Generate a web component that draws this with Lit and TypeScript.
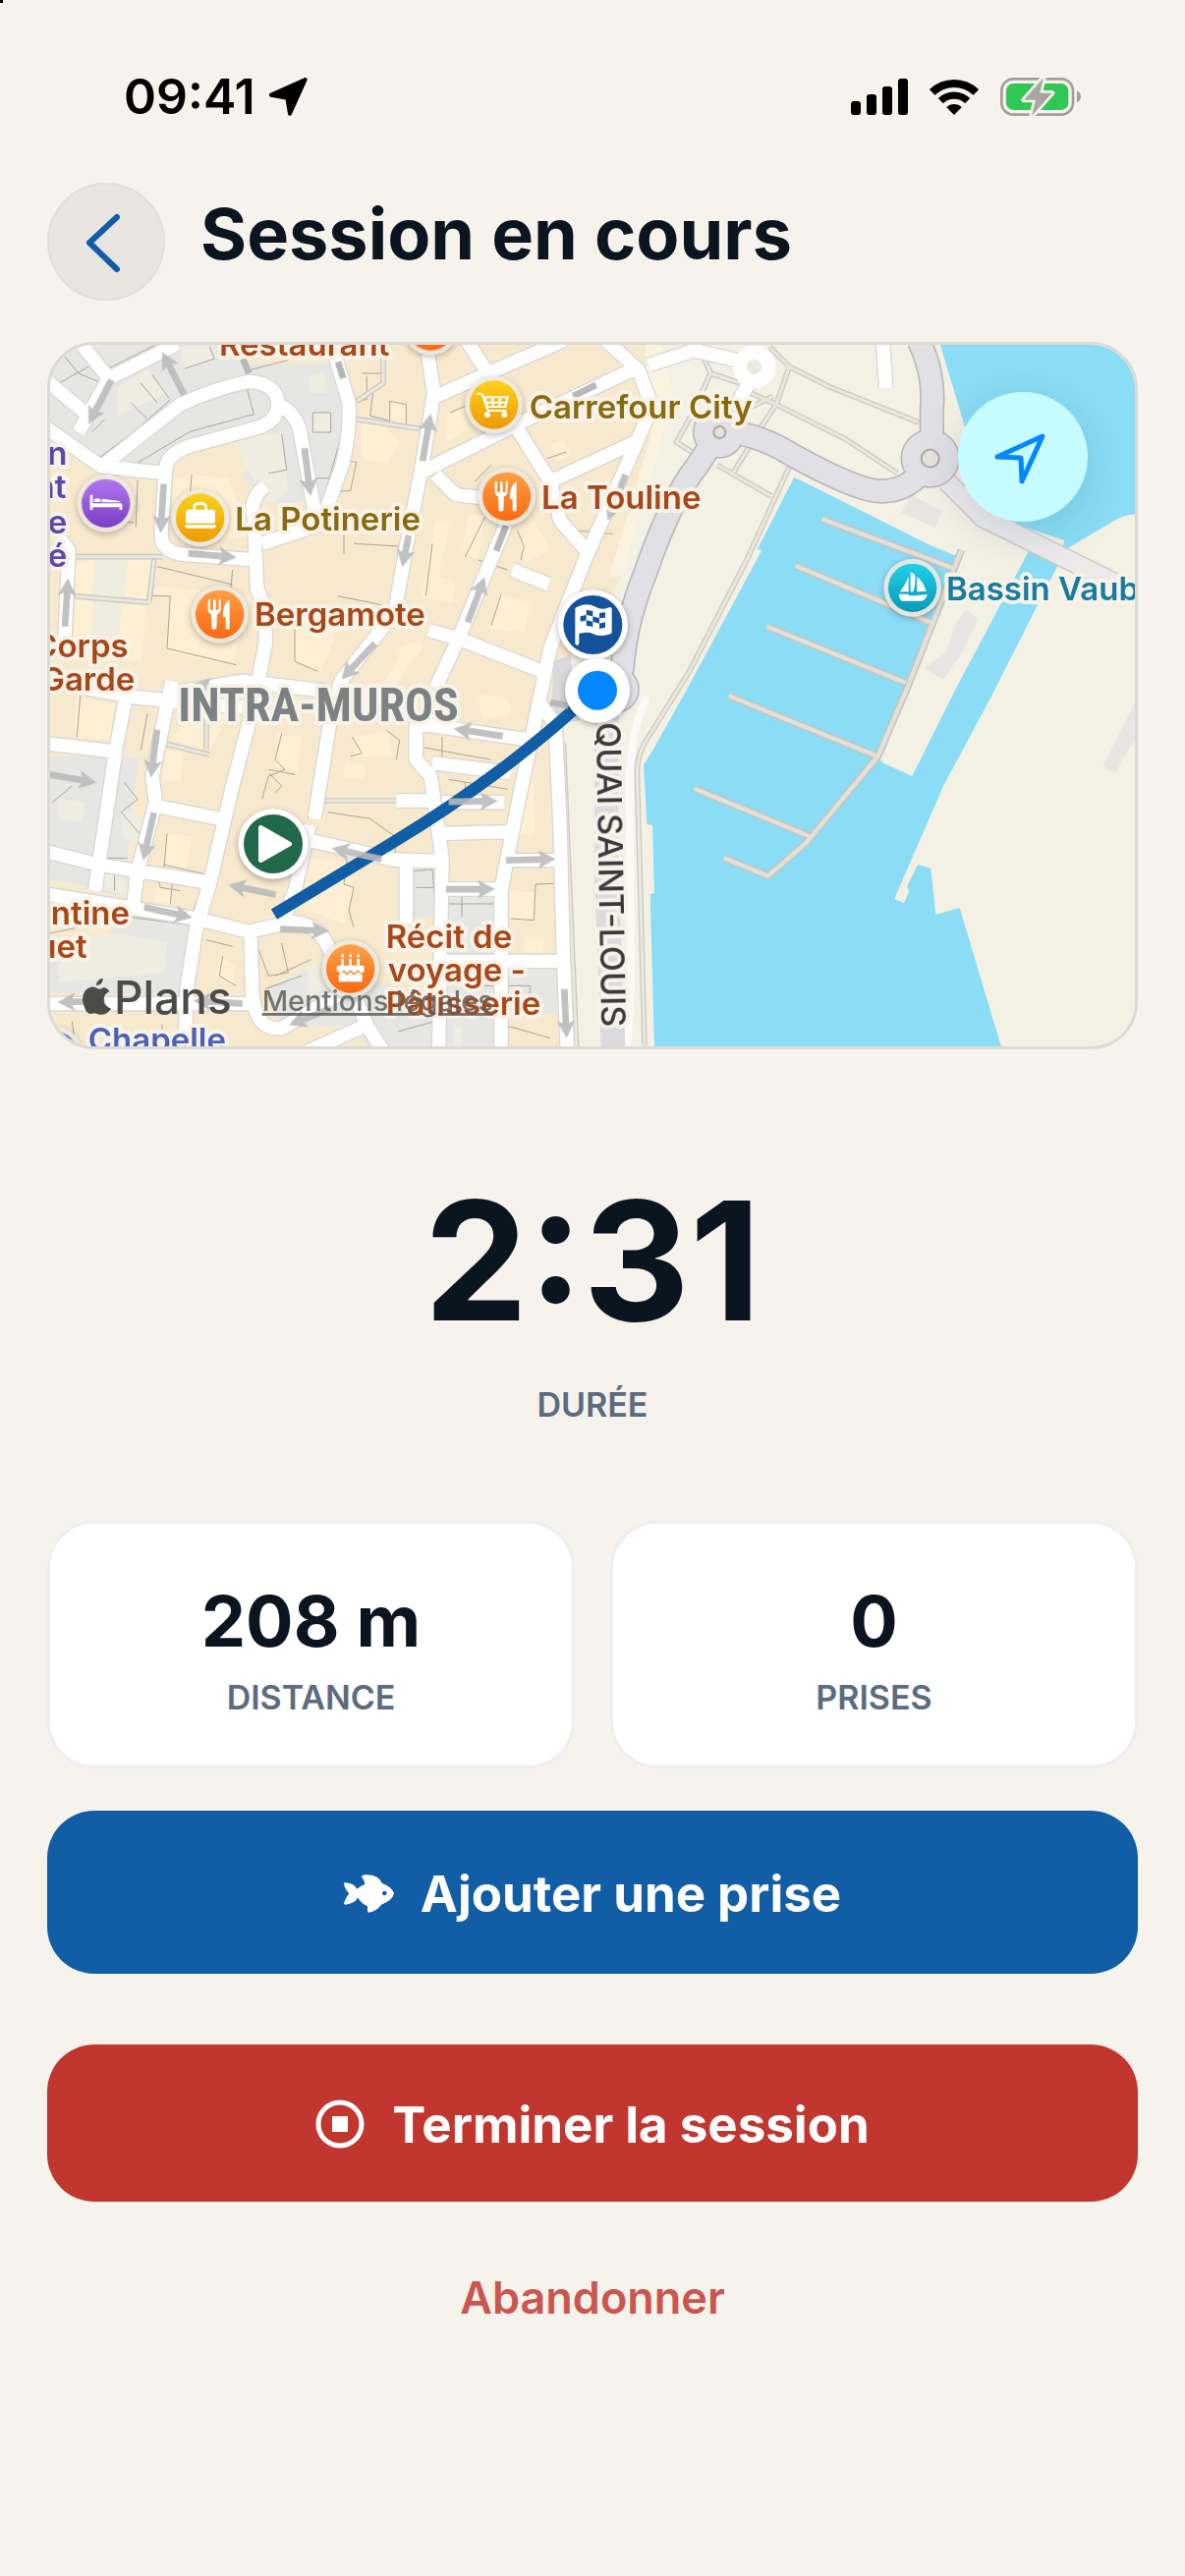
import { LitElement, html, svg, css } from 'lit';
import { customElement, property } from 'lit/decorators.js';

// Map geometry. The plan is drawn on a 3312 x 2142 grid that starts at 33,33.

const WATER = [
  'M2305 437L2720 645 2805 680 2760 800 2645 1080 2560 1295 2580 1312 2665 1350 2800 1080 3025 655 3010 590 3130 630 3115 695 2905 1110 2760 1380 2630 1680 2610 1725 2640 1738 2655 1705 2650 1685 2682 1620 2722 1632 2737 1773 2810 1752 2938 2180H1878L1865 1710 1878 1708 1872 1500 1855 1497 1845 1315 1865 1285 1980 1080 2205 662 2193 656Z',
  'M2750 30L2825 280 2900 500 3010 600 3130 660 3290 565Q3320 550 3350 550V30Z',
];

const GREY_BLOCKS = [
  'M33 33H560L640 90 900 90 960 280 890 500 720 520 620 440 700 300 400 350 375 400 190 400 33 300Z',
  'M33 1290L220 1290 165 1690 33 1665Z',
  'M245 1290L305 1295 275 1500 265 1715 185 1705Z',
  'M250 1765L470 1805 430 2020 33 2010V1880L150 1960Z',
  'M690 2000L860 1920 1040 1980 1220 2060V2175H1000L960 2110 740 2120Z',
  'M1137 1635L1200 1632 1212 1780 1138 1780Z',
  'M1242 1715L1395 1722 1390 1910 1240 1900Z',
  'M1225 1960H1390V2175H1225ZM1435 1940H1580L1590 2080 1435 2060Z',
];

const GREEN_PATCHES = [
  'M200 100L330 45 300 80 215 125ZM430 40H520L540 75 445 105ZM240 160L330 110 390 180 240 250Z',
  'M170 690L270 690 240 930 160 930Z',
  'M590 330L740 300 760 480 700 520 660 450Z',
  'M820 130L870 120 880 180 830 180ZM835 240H890V300H835Z',
  'M60 1420L140 1430 130 1490 60 1480ZM250 1460L310 1470 300 1550 260 1540Z',
  'M190 1600L260 1630 265 1710 185 1695Z',
  'M60 1850L250 1830 390 1860 380 1950 60 1980Z',
  'M820 1930L900 1900 940 1960 820 2030ZM1265 2110L1290 2120V2175H1265Z',
];

const LIGHT_BLOCKS = [
  'M110 700L170 690 160 800 105 795ZM110 810L330 830 310 1000 100 990ZM270 690H345L335 810 260 800Z',
  'M470 430L580 440 640 620 400 640 410 440Z',
  'M360 770L650 800 590 1010 385 970 400 800 345 790Z',
  'M780 870L930 860 860 1030 780 1000ZM1130 940L1175 950 1080 1080H1040Z',
  'M985 270L1040 265 1100 330 1060 400 985 380ZM1080 200L1120 215V275L1070 270Z',
  'M1210 570L1255 570 1220 740 1270 760 1260 820 1165 805Z',
  'M1310 550L1360 555 1340 690 1290 670ZM1240 250L1300 220 1310 290 1240 330Z',
  'M1510 570L1560 660 1480 700 1470 640ZM1410 795L1500 820 1480 910 1370 900Z',
  'M1560 340L1600 320 1620 370 1580 390ZM1100 960L1170 930 1080 1070Z',
  'M725 1220L800 1230 790 1340 720 1320ZM385 1270L440 1280 430 1370 380 1360Z',
  'M390 1525L465 1535 450 1640 375 1620ZM350 1690L410 1700 400 1740 350 1735Z',
  'M955 1230L1060 1210 1080 1290 960 1290ZM935 1310L1000 1315 990 1360 925 1355Z',
  'M820 1600L940 1610 960 1700 930 1800 790 1750ZM1000 1100H1070L1080 1160 1000 1180Z',
  'M1440 1700L1515 1705 1510 1790 1435 1785ZM1480 1840H1540V1900H1480ZM1460 1350L1510 1340V1530L1450 1530Z',
  'M1340 1100L1430 1110 1440 1160 1350 1180ZM550 1900L600 1930 590 1990 540 1960Z',
  'M490 1110L600 1120 520 1270 400 1240ZM110 1110L230 1130 215 1240 110 1230Z',
];

const BUILDING_LINES = [
  'M70 60L120 120 190 150M150 100L60 150M95 190L145 235 170 220M180 380L300 290 400 200',
  'M280 405L460 298 655 245 630 150M160 300L200 260M280 210L330 260M310 150L360 210M345 125L395 195',
  'M200 110L350 35M445 105L535 75 520 40M500 170L640 145M640 110L760 80',
  'M835 240H890V300H835ZM700 425L755 415 740 305M840 440H890M930 100L925 300 880 460',
  'M985 120H1050V160M1000 130V200L970 205M1020 170L1010 250 1070 265M1070 265V205L1120 215V275',
  'M465 430L460 500M300 445L295 590M210 575H290M590 720L585 775M110 680H350L345 800',
  'M360 710L590 765M400 800L390 960 600 1010M340 800L400 800M780 870V1000L850 1030M910 800L1060 830',
  'M915 480L940 385 968 392 950 478ZM930 600V670M1200 640L1180 800M960 640L1130 650',
  'M1255 240L1300 220M1490 250L1760 130M1320 340L1400 300M1330 450L1380 400M1550 380L1610 360M1640 600L1750 610',
  'M1460 600L1480 650 1470 690M1410 795L1380 890M1340 690L1430 720M1300 680L1360 560',
  'M125 1105L115 1230M330 1160L310 1270M460 1100L470 1180M510 1120L500 1190 520 1200',
  'M740 1220L720 1300 750 1330 700 1350 680 1420M700 1340L740 1380 720 1400M700 1330L780 1345',
  'M870 1230L820 1480M955 1230L985 1280 950 1290M1060 1210L1100 1240 1090 1300M870 1430H1080',
  'M390 1525L380 1640M540 1520L510 1650 380 1620M260 1370L300 1420 250 1460 310 1530M100 1380L40 1430M200 1520L150 1690',
  'M180 1600H270M230 1640V1700M410 1640L400 1740M500 1680L470 1760M360 1660L370 1690 430 1700',
  'M940 1600L930 1680 960 1690 945 1760 960 1810M880 1460L1010 1480 1080 1530 1090 1600',
  'M510 1850L590 1870M560 1900L550 1960 600 1990M740 1860L760 1950 700 1960 670 1880M720 1960L830 1910',
  'M1140 1640L1200 1635 1212 1780M1150 1690H1210M1245 1740H1390M1290 1720V1780M1160 1260L1380 1300M1230 1230V1300',
  'M1250 1360L1430 1390M1300 1370V1420M1520 1240L1510 1300M1440 1785L1510 1790 1515 1680 1575 1678M1340 1990H1500L1490 2060',
  'M1095 2130L1240 2090M1420 2110L1560 2150M690 2000L800 1960M33 1830L270 1780 470 1805M375 2110V2170M100 2100L110 2175',
];

const LANES = [
  'M120 20L212 135 120 300M212 135L420 30',
  'M20 140L150 250M20 285L190 405 385 425',
  'M190 405L430 215Q540 165 640 145 720 150 728 205 735 270 650 290L450 345Q385 370 385 420L372 610Q372 660 430 672L665 690',
  'M728 215Q790 240 800 320L840 540',
  'M890 20L945 210Q950 300 925 400L860 580 680 640',
  'M690 465Q640 500 655 560L665 780Q695 840 690 950L650 1150 590 1380 520 1680 480 1810 450 2000 445 2180',
  'M1180 20L1205 180 1165 420 1120 650 1085 850 920 1060 885 1200 840 1480M825 1500L780 1700 740 1800',
  'M60 620L90 660 75 990M20 1060L300 1110 620 1140M880 1090L620 1060 380 1100',
  'M20 1250L230 1275M270 1080L235 1260 170 1700M405 1060L345 1350 355 1430 300 1640 285 1760',
  'M350 1440L550 1480M20 1580L180 1620 520 1675M20 1710L480 1785 640 1825 770 1795Q860 1800 890 1890',
  'M645 1830L650 2010Q660 2130 740 2120L960 1990M20 2045H650M820 2190L1000 2110 1050 2190M1000 2110L970 2040',
  'M800 1540L1080 1605 1230 1610M1120 1610L1120 1800',
  'M1200 1180L1150 1200 1150 1300 1195 1350 1230 1600 1220 2180M1160 1190L1500 1240M1200 1310L1440 1340M1090 1425H1200M1230 1430L1420 1430M1230 1525L1430 1520',
  'M1305 20L1370 120M1200 195L1370 120 1600 20M1170 420L1480 265 1820 105',
  'M1730 20L1830 110 1870 220 1820 340 1670 680 1610 830 1560 960 1520 1150 1440 1540 1410 1700V2190',
  'M1460 290L1560 450 1590 570 1670 660M1560 450L1820 330M1210 430L1270 490 1390 505',
  'M1425 580L1280 930 1210 1080M1190 905L1280 930 1560 1040M1445 720L1555 765',
  'M1530 1130L1575 1190 1590 1500 1600 1900 1612 2190M1410 1607H1590M1235 1695H1400M1230 1915H1590',
  'M2150 85L2000 50 1860 95M2180 130L2130 210M2575 20L2585 165',
];

const FOOTPATHS = [
  'M2230 40L2290 100 2410 160 2685 270M2160 175L2250 215 2460 320 2620 425M2290 100L2250 215 2160 350',
  'M2010 30L2050 120 1990 250 1945 330 2000 365M2050 120L2140 150M2170 340L2115 430M2070 400L2235 495M2240 190L2160 230',
  'M2290 405L2160 690 1985 1030 1860 1230Q1825 1280 1825 1340L1832 1580 1848 2180',
  'M1050 60V150L970 205M970 260L1165 290M105 680H375M350 690L335 820M105 800L335 820M380 1250L520 1285M510 1130V1270',
  'M870 1425H1090M1600 1250L1640 2180',
];

const PIERS = [
  'M2390 565L2790 715M2310 708L2720 880M2222 893L2645 1065M2105 1105L2560 1290M2000 1388L2355 1535',
  'M2090 1600L2225 1655 2340 1555 2560 1290 2650 1080 2815 660',
];

const MAIN_ROADS = [
  'M2685 20Q2735 120 2725 230V380',
  'M2720 380Q2670 480 2570 480 2500 480 2300 370 2180 295 2075 300',
  'M2075 300L2010 400Q1930 500 1850 730 1790 880 1780 1020L1740 1120',
];

// from x, from y, to x, to y
const ARROWS = [
  [220, 140, 150, 275], [442, 185, 375, 55], [380, 458, 370, 608], [455, 670, 602, 682],
  [810, 348, 828, 495], [78, 893, 88, 745], [1025, 945, 922, 1055], [1128, 615, 1108, 712],
  [1170, 388, 1195, 243], [560, 1085, 468, 1068], [1308, 880, 1360, 742], [1790, 430, 1735, 570],
  [360, 1208, 340, 1355], [350, 1462, 317, 1608], [20, 1343, 175, 1370], [722, 1712, 577, 1682],
  [320, 1750, 467, 1782], [735, 1817, 885, 1823], [1045, 1604, 893, 1570], [200, 2038, 55, 2040],
  [620, 2045, 470, 2035], [890, 2060, 762, 2110], [1415, 1228, 1265, 1205], [1250, 1428, 1400, 1426],
  [1425, 1607, 1577, 1603], [1242, 1695, 1392, 1695], [1603, 2000, 1610, 2150],
];

const SHAFTS = 'M912 85L928 135M622 75L640 120M1425 585L1395 662M1700 155L1630 190M1560 1125L1615 1135';

const FORK_KNIFE = svg`
  <path d="M-36-45V-16Q-36-4-26 0L-24 43Q-17 48-10 43L-8 0Q3-4 3-16V-45H-3V-14H-12V-45H-20V-14H-29V-45Z"/>
  <path d="M30-45Q8-32 10 8H18V43Q24 48 30 43Z"/>`;

const BED = svg`
  <path d="M-48-26H-40V0H46Q50 0 50 6V20H42V12H-40V20H-48Z"/>
  <path d="M-36-12Q-30-18-16-12V-4H-36Z"/><path d="M-12-14L38-8Q44-8 44-3H-12Z"/>`;

const BAG = svg`
  <path d="M-18-22V-32Q-18-44 0-44T18-32V-22" fill="none" stroke="#fff" stroke-width="8"/>
  <rect x="-44" y="-25" width="90" height="42" rx="5"/><path d="M-46 22H48V26Q48 32 40 32H-38Q-46 32-46 26Z"/>`;

const CART = svg`
  <path d="M-50-34H-40Q-36-34-34-28L-20 14Q-18 18-14 18H36" fill="none" stroke="#fff" stroke-width="6" stroke-linecap="round"/>
  <path d="M-34-26H46L38 9H-22ZM-22-20V-10H-8V-20ZM0-20V-10H14V-20ZM22-20V-10H36V-20ZM-18-4V4H-6V-4ZM0-4V4H14V-4ZM21-4V4H32V-4Z" fill-rule="evenodd"/>
  <circle cx="-20" cy="30" r="9"/><circle cx="32" cy="30" r="9"/>`;

const BOAT = svg`
  <path d="M-6-47Q6-46 8-36 10-10 2 12H-6ZM-12-34V12H-38Q-22-8-12-34ZM14-34Q34-16 42 10L14 12Z"/>
  <path d="M-42 19H-12V24H8L46 20Q38 40 28 40H-32Q-40 36-42 19Z"/>`;

const CAKE = svg`
  <path d="M-28-30H-20V-8H-28ZM-4-30H4V-8H-4ZM20-30H28V-8H20ZM-24-48L-19-38Q-24-30-29-38ZM0-48L5-38Q0-30-5-38ZM24-48L29-38Q24-30 19-38Z"/>
  <path d="M-34-10H36Q42-10 42-4V8L34 14 22 4 12 14 0 4-10 14-20 4-30 14-42 6V-4Q-42-10-34-10ZM-36 18L-20 10-10 20 0 10 12 20 22 10 36 18V40H-36Z"/>`;

const POIS = [
  { x: 203, y: 517, tint: 'purple', glyph: BED },
  { x: 491, y: 561, tint: 'yellow', glyph: BAG },
  { x: 551, y: 856, tint: 'orange', glyph: FORK_KNIFE },
  { x: 1195, y: -24, tint: 'orange', glyph: '' },
  { x: 1388, y: 216, tint: 'yellow', glyph: CART },
  { x: 1427, y: 496, tint: 'orange', glyph: FORK_KNIFE },
  { x: 2666, y: 775, tint: 'teal', glyph: BOAT },
  { x: 950, y: 1938, tint: 'orange', glyph: CAKE },
  { x: 44, y: 2202, tint: 'indigo', glyph: '' },
];

const LABELS = [
  { x: 549, y: 67, kind: 'food', text: 'Restaurant' },
  { x: 598, y: 600, kind: 'shop', text: 'La Potinerie' },
  { x: 657, y: 892, kind: 'food', text: 'Bergamote' },
  { x: 1496, y: 257, kind: 'shop', text: 'Carrefour City' },
  { x: 1533, y: 535, kind: 'food', text: 'La Touline' },
  { x: 2769, y: 813, kind: 'port', text: 'Bassin Vauban' },
  { x: 85, y: 398, kind: 'hotel end', text: 'n' },
  { x: 82, y: 502, kind: 'hotel end', text: 'nt' },
  { x: 85, y: 608, kind: 'hotel end', text: 'e' },
  { x: 85, y: 712, kind: 'hotel end', text: 'é' },
  { x: 272, y: 986, kind: 'food end', text: 'Corps' },
  { x: 292, y: 1090, kind: 'food end', text: 'Garde' },
  { x: 276, y: 1802, kind: 'food end', text: 'ntine' },
  { x: 146, y: 1904, kind: 'food end', text: 'uet' },
  { x: 1058, y: 1875, kind: 'food', text: 'Récit de' },
  { x: 1064, y: 1977, kind: 'food', text: 'voyage -' },
  { x: 1058, y: 2079, kind: 'food', text: 'Pâtisserie' },
  { x: 149, y: 2189, kind: 'sight', text: 'Chapelle' },
];

const GRADIENTS = [
  ['purple', '#b277ee', '#7a3fc4'],
  ['yellow', '#fbd21a', '#ee9a06'],
  ['orange', '#ff9f45', '#f96a12'],
  ['teal', '#22d0ea', '#0899b6'],
  ['indigo', '#5a6dd4', '#4f60c4'],
];

@customElement('session-map')
export class SessionMap extends LitElement {
  static override styles = css`
    :host {
      display: block;
    }
    .map {
      position: relative;
      border: 3px solid #dcdad4;
      border-radius: 48px;
      overflow: hidden;
      background: #f3f0e4;
    }
    .map__plan {
      display: block;
      width: 100%;
      height: auto;
      font-family: Inter, 'Liberation Sans', sans-serif;
    }
    .stroke {
      fill: none;
      stroke-linejoin: round;
    }
    .lane-edge {
      stroke: #dad8d4;
      stroke-width: 48px;
    }
    .lane {
      stroke: #ffffff;
      stroke-width: 40px;
    }
    .path-edge {
      stroke: #cccac3;
      stroke-width: 17px;
    }
    .path {
      stroke: #e9e7de;
      stroke-width: 9px;
    }
    .pier-edge {
      stroke: #c4c6c2;
      stroke-width: 23px;
    }
    .pier {
      stroke: #e2e0d9;
      stroke-width: 13px;
    }
    .main-edge {
      stroke: #b9b8bb;
      stroke-width: 76px;
    }
    .main {
      stroke: #e1e0e5;
      stroke-width: 66px;
    }
    .label {
      font-size: 99px;
      font-weight: 600;
      paint-order: stroke;
      stroke: #f8f3e8;
      stroke-width: 24px;
      stroke-linejoin: round;
    }
    .end {
      text-anchor: end;
    }
    .food {
      fill: #a8481a;
    }
    .shop {
      fill: #8a6a0e;
    }
    .port {
      fill: #177c9e;
    }
    .hotel {
      fill: #5e46ae;
    }
    .sight {
      fill: #4b60b8;
    }
    .district {
      font-family: 'Liberation Sans Narrow', 'Roboto Condensed', Roboto, sans-serif;
      font-size: 144px;
      font-weight: 700;
      fill: #7c8183;
    }
    .quay {
      font-size: 102px;
      font-weight: 500;
      fill: #3a3a3c;
    }
    .brand {
      font-size: 138px;
      font-weight: 500;
      fill: #4b4b49;
    }
    .legal {
      font-size: 87px;
      font-weight: 500;
      fill: #5f5f5d;
      opacity: 0.85;
      text-decoration: underline;
    }
    .marker {
      filter: drop-shadow(0 6px 10px rgba(0, 0, 0, 0.3));
    }
    .map__locate {
      position: absolute;
      top: 48px;
      right: 48px;
      width: 132px;
      height: 132px;
      padding: 0;
      border: 0;
      border-radius: 50%;
      background: #c6fbff;
      box-shadow: 0 12px 48px rgba(0, 60, 90, 0.14);
    }
    .map__locate-icon {
      display: block;
      width: 100%;
      height: 100%;
    }
  `;

  private stroke(paths: string[], kind: string) {
    return svg`<path class="stroke ${kind}" d=${paths.join('')} />`;
  }

  private arrow([x1, y1, x2, y2]: number[]) {
    const length = Math.hypot(x2 - x1, y2 - y1);
    const angle = (Math.atan2(y2 - y1, x2 - x1) * 180) / Math.PI;
    return svg`
      <path
        transform="translate(${x2} ${y2}) rotate(${angle})"
        d="M${-length}-10H-46L-54-28 0 0-54 28-46 10H${-length}Z"
      />`;
  }

  private poi({ x, y, tint, glyph }: (typeof POIS)[number]) {
    return svg`
      <g class="marker" transform="translate(${x} ${y})">
        <circle r="88" fill="#f5efe4" opacity=".85" />
        <circle r="74" fill="url(#${tint})" />
        <g fill="#fff">${glyph}</g>
      </g>`;
  }

  override render() {
    return html`
      <div class="map">
        <svg class="map__plan" viewBox="33 33 3312 2142" role="img" aria-label="Carte de la session">
          <defs>
            ${GRADIENTS.map(
              ([id, from, to]) => svg`
                <linearGradient id=${id} x2="0" y2="1">
                  <stop stop-color=${from} /><stop offset="1" stop-color=${to} />
                </linearGradient>`
            )}
          </defs>
          <rect x="33" y="33" width="3312" height="2142" fill="#f3f0e4" />
          <path fill="#f7e9ce" d="M33 33H1900L1935 180 1880 400 1780 740 1620 1000 1600 1180 1640 2180H33Z" />
          <path fill="#fbf3e0" d="M1850 33H1900L1935 180 1880 400 1780 740 1740 740 1870 300Z" />
          <path fill="#f3f0e4" d="M1560 1180H1620L1650 2180H1600Z" />
          <path fill="#e6e6e4" d=${GREY_BLOCKS.join('')} />
          <path fill="#fcefd3" d=${LIGHT_BLOCKS.join('')} />
          <path fill="#efede0" d=${GREEN_PATCHES.join('')} />
          <path class="stroke" stroke="#aaa498" stroke-width="3" d=${BUILDING_LINES.join('')} />
          <path fill="#8bdcf5" d=${WATER.join('')} />
          <path fill="#e8e6e2" d="M2660 490L2755 540 2735 592 2632 545ZM2830 840L2865 870 2820 970 2760 1055 2702 1020 2770 970 2800 880ZM3345 1125V1240L3285 1340 3247 1320Z" />
          ${this.stroke(FOOTPATHS, 'path-edge')} ${this.stroke(FOOTPATHS, 'path')}
          ${this.stroke(PIERS, 'pier-edge')} ${this.stroke(PIERS, 'pier')}
          ${this.stroke(LANES, 'lane-edge')} ${this.stroke(LANES, 'lane')}
          <circle cx="2183" cy="100" r="44" fill="#eceade" stroke="#fff" stroke-width="42" />
          <path class="stroke" stroke="#cfcdcb" stroke-width="64" d="M2770 450L2880 560 3345 790" />
          <path class="stroke" stroke="#ebe9ea" stroke-width="54" d="M2770 450L2880 560 3345 790" />
          <path class="stroke" stroke="#fbfaf6" stroke-width="24" stroke-linecap="round" d="M1850 1115Q1800 1230 1802 1400L1806 2000 1795 2180" />
          <path class="stroke" stroke="#dbdbdf" stroke-width="74" d="M1732 1080V1640L1752 2180" />
          <path fill="#d9d9dc" d="M1570 1000L1620 980 1650 1180 1590 1190 1565 1120Z" />
          <g fill="#e1e0e5" stroke="#b9b8bb" stroke-width="5">
            <circle cx="2720" cy="380" r="88" /><circle cx="2075" cy="300" r="78" /><circle cx="1760" cy="1085" r="70" />
          </g>
          ${this.stroke(MAIN_ROADS, 'main-edge')}
          <g fill="#e1e0e5">
            <circle cx="2720" cy="380" r="85" /><circle cx="2075" cy="300" r="75" /><circle cx="1760" cy="1085" r="67" />
          </g>
          ${this.stroke(MAIN_ROADS, 'main')}
          <g fill="#e6e4d8" stroke="#b0afb1" stroke-width="7">
            <circle cx="2720" cy="380" r="27" /><circle cx="2077" cy="300" r="18" />
          </g>

          <path class="stroke" stroke="#115da6" stroke-width="36" d="M717 1772L1080 1552Q1390 1365 1640 1140" />
          <g fill="#bababa" opacity=".9">${ARROWS.map((a) => this.arrow(a))}</g>
          <path class="stroke" stroke="#b8b8b8" stroke-width="20" d=${SHAFTS} />

          <text class="label district" x="424" y="1182">INTRA-MUROS</text>
          <text class="label quay" transform="translate(1700 1186) rotate(89)">QUAI SAINT-LOUIS</text>
          ${POIS.map((p) => this.poi(p))}
          ${LABELS.map((l) => svg`<text class="label ${l.kind}" x=${l.x} y=${l.y}>${l.text}</text>`)}

          <path fill="#4b4b49" d="M214 2008Q196 2016 197 2034 198 2052 219 2060 208 2078 188 2078 180 2078 174 2075T158 2076Q140 2078 132 2034 132 2000 158 1994 168 1993 177 1998T196 1995Q208 1996 214 2008ZM174 1990Q174 1972 194 1967 196 1984 174 1990Z" />
          <text class="brand" x="228" y="2075">Plans</text>
          <a href="#mentions"><text class="legal" x="680" y="2067">Mentions légales</text></a>

          <g class="marker" transform="translate(714 1557)">
            <circle r="107" fill="#fff" /><circle r="90" fill="#22694a" />
            <path fill="#fff" stroke="#fff" stroke-width="14" stroke-linejoin="round" d="M-38-50V50L50 0Z" />
          </g>
          <g class="marker" transform="translate(1690 888)">
            <circle r="107" fill="#fff" /><circle r="90" fill="#15529c" />
            <path class="stroke" stroke="#fff" stroke-width="12" stroke-linecap="round" d="M-48 56V-48Q-20-64 4-50T52-48V22Q26 32 4 22T-48 22" />
            <path fill="#fff" d="M-44-46Q-20-60 4-46T48-44V24Q26 30 4 20T-44 20Z" />
            <path fill="#15529c" d="M-20-46L0-42V-26L-20-30ZM0-26L20-20V-4L0-10ZM20-36L38-38V-22L20-20ZM-38-26L-20-30V-14L-38-10ZM-20-14L0-10V6L-20 2ZM20-4L38-8V8L20 12Z" />
          </g>
          <g class="marker" transform="translate(1704 1088)">
            <circle r="99" fill="#fff" /><circle r="60" fill="#0587ff" />
          </g>
        </svg>
        <button class="map__locate" type="button" aria-label="Me localiser">
          <svg class="map__locate-icon" viewBox="0 0 132 132">
            <path d="M40 66L86 45 65 91 64 67Z" fill="none" stroke="#0587ff" stroke-width="5" stroke-linejoin="round" />
          </svg>
        </button>
      </div>
    `;
  }
}

@customElement('stat-card')
export class StatCard extends LitElement {
  static override styles = css`
    :host {
      display: block;
    }
    .stat {
      display: flex;
      flex-direction: column;
      align-items: center;
      gap: 22px;
      padding: 63px 24px 49px;
      border: 3px solid #edeff0;
      border-radius: 48px;
      background: #ffffff;
    }
    .stat__value {
      font-size: 72px;
      line-height: 72px;
      font-weight: 700;
      color: #0b1520;
    }
    .stat__label {
      font-size: 34px;
      line-height: 40px;
      font-weight: 600;
      text-transform: uppercase;
      color: #5b6b80;
    }
  `;

  @property() value = '';
  @property() label = '';

  override render() {
    return html`
      <div class="stat">
        <span class="stat__value">${this.value}</span>
        <span class="stat__label">${this.label}</span>
      </div>
    `;
  }
}

@customElement('app-root')
export default class AppRoot extends LitElement {
  static override styles = css`
    :host {
      display: block;
      min-height: 100vh;
      background: linear-gradient(#000, #000) 0 0 / 3px 3px no-repeat #f6f3ec;
      color: #0b1520;
      font-family: Inter, 'Liberation Sans', sans-serif;
    }
    .status {
      display: flex;
      align-items: center;
      justify-content: space-between;
      height: 52px;
      padding: 72px 106px 62px 126px;
      color: #000000;
    }
    .status__time,
    .status__icons {
      display: flex;
      align-items: center;
    }
    .status__time {
      gap: 14px;
      font-size: 50px;
      line-height: 52px;
      font-weight: 600;
    }
    .status__icons {
      gap: 22px;
    }
    .page {
      display: flex;
      flex-direction: column;
      padding: 0 48px 120px;
    }
    .header {
      display: flex;
      align-items: center;
      gap: 36px;
      margin-bottom: 42px;
    }
    .header__back {
      flex: none;
      width: 120px;
      height: 120px;
      padding: 0;
      border: 2px solid #e2dfdb;
      border-radius: 50%;
      background: #e9e6e2;
    }
    .header__icon {
      display: block;
      width: 100%;
    }
    .header__title {
      margin: 0;
      padding-bottom: 16px;
      font-size: 72px;
      line-height: 88px;
      font-weight: 700;
    }
    .timer {
      display: flex;
      flex-direction: column;
      align-items: center;
      gap: 43px;
      padding: 131px 0 98px;
    }
    .timer__value {
      font-size: 168px;
      line-height: 168px;
      font-weight: 700;
    }
    .timer__label {
      font-size: 34px;
      line-height: 40px;
      font-weight: 600;
      text-transform: uppercase;
      color: #5b6b80;
    }
    .stats {
      display: grid;
      grid-template-columns: 1fr 1fr;
      gap: 36px;
      margin-bottom: 43px;
    }
    .action {
      display: flex;
      align-items: center;
      justify-content: center;
      gap: 27px;
      padding: 3px 48px 0;
      border: 0;
      border-radius: 48px;
      color: #ffffff;
      font-family: inherit;
      font-size: 51px;
      font-weight: 700;
      line-height: 64px;
    }
    .action--add {
      min-height: 166px;
      margin-bottom: 72px;
      background: #115da6;
    }
    .action--stop {
      min-height: 160px;
      margin-bottom: 71px;
      background: #c1362f;
    }
    .abandon {
      align-self: center;
      padding: 0;
      border: 0;
      background: none;
      color: #ca564f;
      font-family: inherit;
      font-size: 45px;
      line-height: 54px;
      font-weight: 600;
    }
  `;

  private renderStatus() {
    return html`
      <div class="status">
        <span class="status__time">
          09:41
          <svg width="39" height="39" viewBox="0 0 117 117">
            <path d="M6 53L110 6 63 110 55 62Z" stroke="#000" stroke-width="12" stroke-linejoin="round" />
          </svg>
        </span>
        <span class="status__icons">
          <svg width="58" height="37" viewBox="0 0 58 37">
            <rect y="23" width="10" height="14" rx="3" />
            <rect x="16" y="16" width="10" height="21" rx="3" />
            <rect x="32" y="8" width="10" height="29" rx="3" />
            <rect x="48" width="10" height="37" rx="3" />
          </svg>
          <svg width="50" height="37" viewBox="0 0 150 111">
            <path d="M8 42A96 96 0 0 1 142 42" fill="none" stroke="#000" stroke-width="24" />
            <path d="M34 68A59 59 0 0 1 116 68" fill="none" stroke="#000" stroke-width="22" />
            <path d="M75 111L52 88A32 32 0 0 1 98 88Z" />
          </svg>
          <svg width="82" height="39" viewBox="0 0 246 117">
            <rect x="4" y="4" width="218" height="109" rx="36" fill="none" stroke="#a19f9a" stroke-width="8" />
            <rect x="18" y="18" width="190" height="81" rx="22" fill="#30c755" />
            <path d="M234 40Q246 46 246 58T234 76Z" fill="#a19f9a" />
            <path d="M132 0L72 68H108L96 117 158 47H121Z" fill="#a8a7a3" stroke="#f6f3ec" stroke-width="16" stroke-linejoin="round" paint-order="stroke" />
          </svg>
        </span>
      </div>
    `;
  }

  override render() {
    return html`
      ${this.renderStatus()}
      <main class="page">
        <header class="header">
          <button class="header__back" type="button" aria-label="Retour">
            <svg class="header__icon" viewBox="0 0 116 116">
              <path d="M69 33L41 59 69 86" fill="none" stroke="#115da6" stroke-width="6" stroke-linecap="round" stroke-linejoin="round" />
            </svg>
          </button>
          <h1 class="header__title">Session en cours</h1>
        </header>
        <session-map></session-map>
        <section class="timer">
          <span class="timer__value">2:31</span>
          <span class="timer__label">Durée</span>
        </section>
        <section class="stats">
          <stat-card value="208 m" label="Distance"></stat-card>
          <stat-card value="0" label="Prises"></stat-card>
        </section>
        <button class="action action--add" type="button">
          <svg width="51" height="39" viewBox="0 0 153 117" fill="#fff">
            <path d="M0 28Q0 24 6 25Q32 28 40 44Q52 34 64 30Q62 16 54 6Q56 2 64 1Q104-2 117 27Q148 38 153 58Q148 80 114 92Q100 112 76 116Q72 116 72 112V97Q54 90 42 70Q36 88 6 92Q0 92 0 88Q4 72 16 58Q2 44 0 28Z" />
            <circle cx="124" cy="57" r="7" fill="#115da6" />
          </svg>
          Ajouter une prise
        </button>
        <button class="action action--stop" type="button">
          <svg width="51" height="51" viewBox="0 0 51 51">
            <circle cx="25" cy="25" r="22" fill="none" stroke="#fff" stroke-width="5" />
            <rect x="17" y="17" width="16" height="16" rx="1" fill="#fff" />
          </svg>
          Terminer la session
        </button>
        <button class="abandon" type="button">Abandonner</button>
      </main>
    `;
  }
}
